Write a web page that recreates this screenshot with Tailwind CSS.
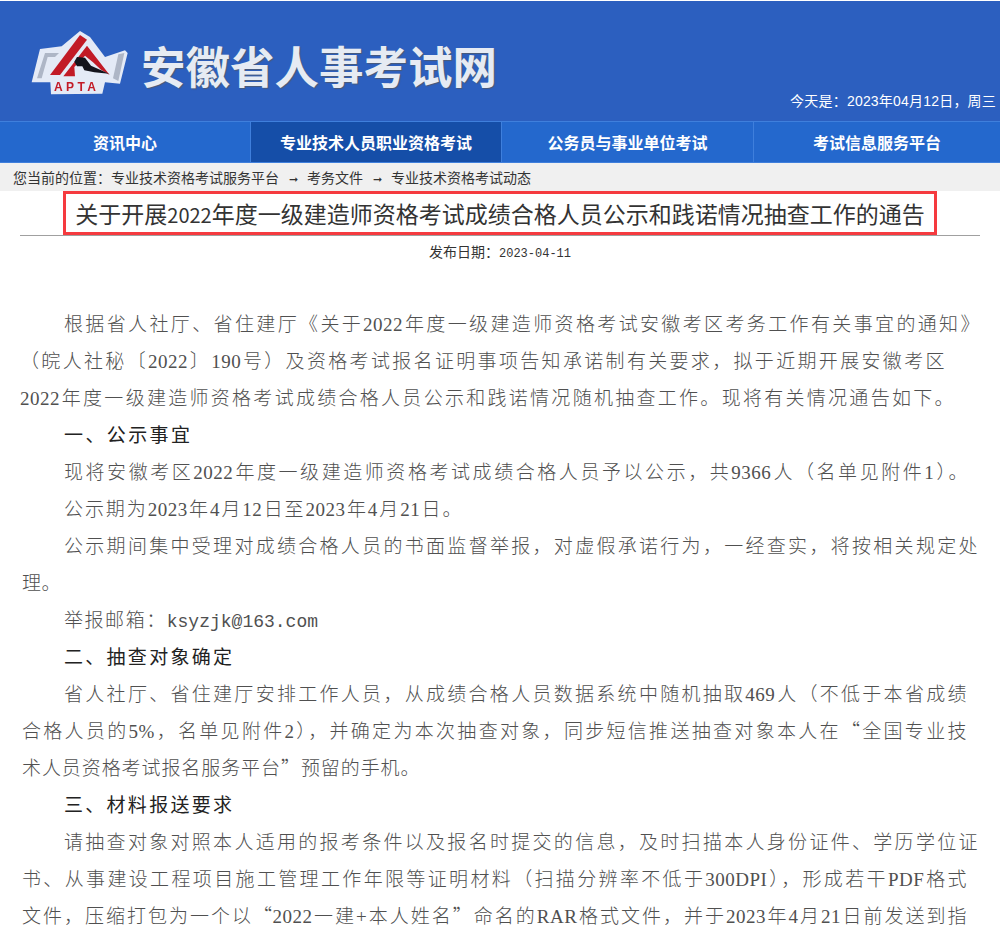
<!DOCTYPE html>
<html lang="zh-CN">
<head>
<meta charset="utf-8">
<script src="https://cdn.jsdelivr.net/npm/@tailwindcss/browser@4"></script>
</head>
<body class="bg-white overflow-hidden h-[938px] font-['Noto_Sans_CJK_SC',sans-serif]">
<header class="h-[120px] mt-px bg-[#2c5fbf] flex items-start relative">
  <svg class="absolute left-[25px] top-[24px] blur-[0.4px]" width="110" height="75" viewBox="0 0 330 225">
    <path d="M20 172 L45 72 L110 64 L165 18 L195 36 L240 96 L300 76 L308 84 L285 176 L240 172 L232 206 L78 208 L76 172 Z" fill="#e4eaf6"/>
    <path d="M36 160 L60 84 L102 84 L90 96 L68 96 L50 160 Z M264 160 L280 88 L298 84 L280 168 Z" fill="#aeb6c6"/>
    <path d="M75 150 L165 30 L186 44 L105 150 Z" fill="#c21a26"/>
    <path d="M115 154 L186 62 L254 150 L228 134 L204 112 L180 92 L148 126 L150 154 Z" fill="#c21a26"/>
    <path d="M148 110 L156 96 L180 98 L198 122 L252 146 L208 142 L178 136 L172 124 L156 124 Z" fill="#14141c"/>
    <text x="155" y="199" text-anchor="middle" font-family="Liberation Sans" font-size="36" font-weight="700" letter-spacing="10" fill="#c21a26">APTA</text>
  </svg>
  <div class="absolute left-[141px] top-[36px] text-[44.5px] leading-[56px] font-bold text-[#e6ebf3] [text-shadow:1px_1px_1px_#4a5a78]">安徽省人事考试网</div>
  <div class="absolute right-1 top-[90px] text-[14px] tracking-[0.2px] leading-5 text-white font-['Liberation_Sans','Noto_Sans_CJK_TC',sans-serif]">今天是：2023年04月12日，周三</div>
</header>
<nav class="grid grid-cols-[251px_251px_252px_1fr] h-[42px] bg-[#2468cd] border-t border-b border-[#3f7fdc] text-white text-[16px] font-bold text-center leading-[40px]">
  <div class="border-r border-[#3f7fdc]">资讯中心</div>
  <div class="border-r border-[#3f7fdc] bg-[#154ea8]">专业技术人员职业资格考试</div>
  <div class="border-r border-[#3f7fdc]">公务员与事业单位考试</div>
  <div>考试信息服务平台</div>
</nav>
<div class="h-[28px] bg-[#f0f0f0] pl-[13px] text-[14px] leading-[28px] text-[#333] whitespace-nowrap">您当前的位置：专业技术资格考试服务平台<span class="inline-block w-[28px] text-center text-[11px]">➞</span>考务文件<span class="inline-block w-[28px] text-center text-[11px]">➞</span>专业技术资格考试动态</div>
<main class="mx-5 w-[960px]">
  <div class="border-b border-[#a0a0a0] h-[45px] flex justify-center">
    <h1 class="w-[874px] h-[44px] border-[3px] border-[#f53a3f] text-[23px] leading-[38px] text-center text-[#333] font-normal whitespace-nowrap">关于开展<span class="text-[20px]">2022</span>年度一级建造师资格考试成绩合格人员公示和践诺情况抽查工作的通告</h1>
  </div>
  <div class="h-[30px] text-center text-[14px] leading-[30px] text-[#333]">发布日期：<span class="font-['Liberation_Mono',monospace] text-[12px]">2023-04-11</span></div>
  <div class="mt-[40px] text-[19px] tracking-[0.5px] leading-[37px] text-[#505050] font-light font-['Liberation_Serif','Noto_Sans_CJK_SC',serif] whitespace-nowrap [text-justify:inter-character] [&>p]:h-[37px] [&>p]:[text-align-last:justify]">
    <p class="pl-[44px] w-[960px]">根据省人社厅、省住建厅《关于2022年度一级建造师资格考试安徽考区考务工作有关事宜的通知》</p>
    <p class="w-[925px]">（皖人社秘〔2022〕190号）及资格考试报名证明事项告知承诺制有关要求，拟于近期开展安徽考区</p>
    <p class="w-[934px]">2022年度一级建造师资格考试成绩合格人员公示和践诺情况随机抽查工作。现将有关情况通告如下。</p>
    <p class="pl-[44px] w-[170px] font-normal tracking-normal text-[#222] text-[19px]">一、公示事宜</p>
    <p class="pl-[44px] w-[948px]">现将安徽考区2022年度一级建造师资格考试成绩合格人员予以公示，共9366人（名单见附件1）。</p>
    <p class="pl-[44px] w-[442px]">公示期为2023年4月12日至2023年4月21日。</p>
    <p class="pl-[44px] w-[958px]">公示期间集中受理对成绩合格人员的书面监督举报，对虚假承诺行为，一经查实，将按相关规定处</p>
    <p class="pl-[2px] w-[40px]">理。</p>
    <p class="pl-[44px] w-[298px]">举报邮箱：<span class="font-['Liberation_Mono',monospace] text-[18px] leading-none tracking-normal">ksyzjk@163.com</span></p>
    <p class="pl-[44px] w-[212px] font-normal tracking-normal text-[#222] text-[19px]">二、抽查对象确定</p>
    <p class="pl-[44px] w-[947px]">省人社厅、省住建厅安排工作人员，从成绩合格人员数据系统中随机抽取469人（不低于本省成绩</p>
    <p class="pl-[2px] w-[947px]">合格人员的5%，名单见附件2），并确定为本次抽查对象，同步短信推送抽查对象本人在<span class="font-['Noto_Sans_CJK_SC'] leading-none">“</span>全国专业技</p>
    <p class="pl-[2px] w-[400px]">术人员资格考试报名服务平台<span class="font-['Noto_Sans_CJK_SC'] leading-none">”</span>预留的手机。</p>
    <p class="pl-[44px] w-[212px] font-normal tracking-normal text-[#222] text-[19px]">三、材料报送要求</p>
    <p class="pl-[44px] w-[958px]">请抽查对象对照本人适用的报考条件以及报名时提交的信息，及时扫描本人身份证件、学历学位证</p>
    <p class="pl-[2px] w-[947px]">书、从事建设工程项目施工管理工作年限等证明材料（扫描分辨率不低于300DPI），形成若干PDF格式</p>
    <p class="pl-[2px] w-[947px]">文件，压缩打包为一个以<span class="font-['Noto_Sans_CJK_SC'] leading-none">“</span>2022一建+本人姓名<span class="font-['Noto_Sans_CJK_SC'] leading-none">”</span>命名的RAR格式文件，并于2023年4月21日前发送到指</p>
  </div>
</main>
</body>
</html>
